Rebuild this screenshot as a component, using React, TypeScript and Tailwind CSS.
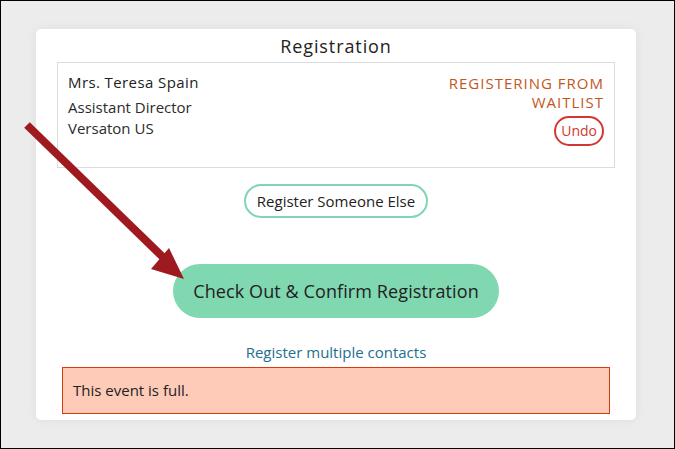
import React from 'react'

const sans = { fontFamily: '"Open Sans", "Noto Sans", Arial, sans-serif' }

function PointerArrow() {
  return (
    <svg className="absolute left-0 top-0 pointer-events-none" width="675" height="449" viewBox="0 0 675 449">
      <line x1="26" y1="124" x2="170" y2="264" stroke="#9e1a20" strokeWidth="8" />
      <polygon points="183,278 150,268 168,247" fill="#9e1a20" />
    </svg>
  )
}

export default function App() {
  return (
    <div className="relative w-[675px] h-[449px] border border-black bg-[#ececec] overflow-hidden text-[#2b2b2b]" style={sans}>
      <div className="ml-[35px] mt-[28px] w-[600px] h-[391px] bg-white rounded-[5px] shadow-[0_0_12px_rgba(0,0,0,0.06)] flex flex-col px-[21px]">
        <h1 className="text-center text-[18px] leading-[24px] pt-[5px] mb-[4px] tracking-[0.9px] text-[#222]">Registration</h1>

        {/* Registrant card */}
        <div className="h-[106px] border border-[#dcdcdc] flex justify-between pl-[10px] pr-[10px] pt-[9px]">
          <div className="text-[15px]">
            <div className="leading-[20px] mb-[5px] tracking-[0.4px] text-[#222]">Mrs. Teresa Spain</div>
            <div className="leading-[21px]">Assistant Director</div>
            <div className="leading-[21px]">Versaton US</div>
          </div>
          <div className="flex flex-col items-end">
            <div className="text-right text-[15px] leading-[19px] text-[#c2571c] tracking-[1px] mt-[2px]">
              REGISTERING FROM<br />WAITLIST
            </div>
            <button className="mt-[4px] h-[30px] px-[5px] rounded-full border-2 border-[#d2382e] text-[#d2382e] text-[14px] leading-none">
              Undo
            </button>
          </div>
        </div>

        <div className="flex justify-center mt-[16px]">
          <button className="h-[34px] px-[11px] rounded-full border-2 border-[#80d6b1] text-[15px] text-[#222]">
            Register Someone Else
          </button>
        </div>

        <div className="flex justify-center mt-[46px]">
          <button className="h-[54px] w-[326px] rounded-full bg-[#80d8b1] text-[18px] tracking-[0.1px] text-[#222]">
            Check Out &amp; Confirm Registration
          </button>
        </div>

        <div className="text-center mt-[22px] text-[15px] leading-[24px] text-[#236f8e]">Register multiple contacts</div>

        <div className="mx-[5px] mt-[3px] h-[47px] border border-[#d93b0e] bg-[#fecbb8] flex items-center pl-[10px] text-[15px] text-[#222]">
          This event is full.
        </div>
      </div>
      <PointerArrow />
    </div>
  )
}
